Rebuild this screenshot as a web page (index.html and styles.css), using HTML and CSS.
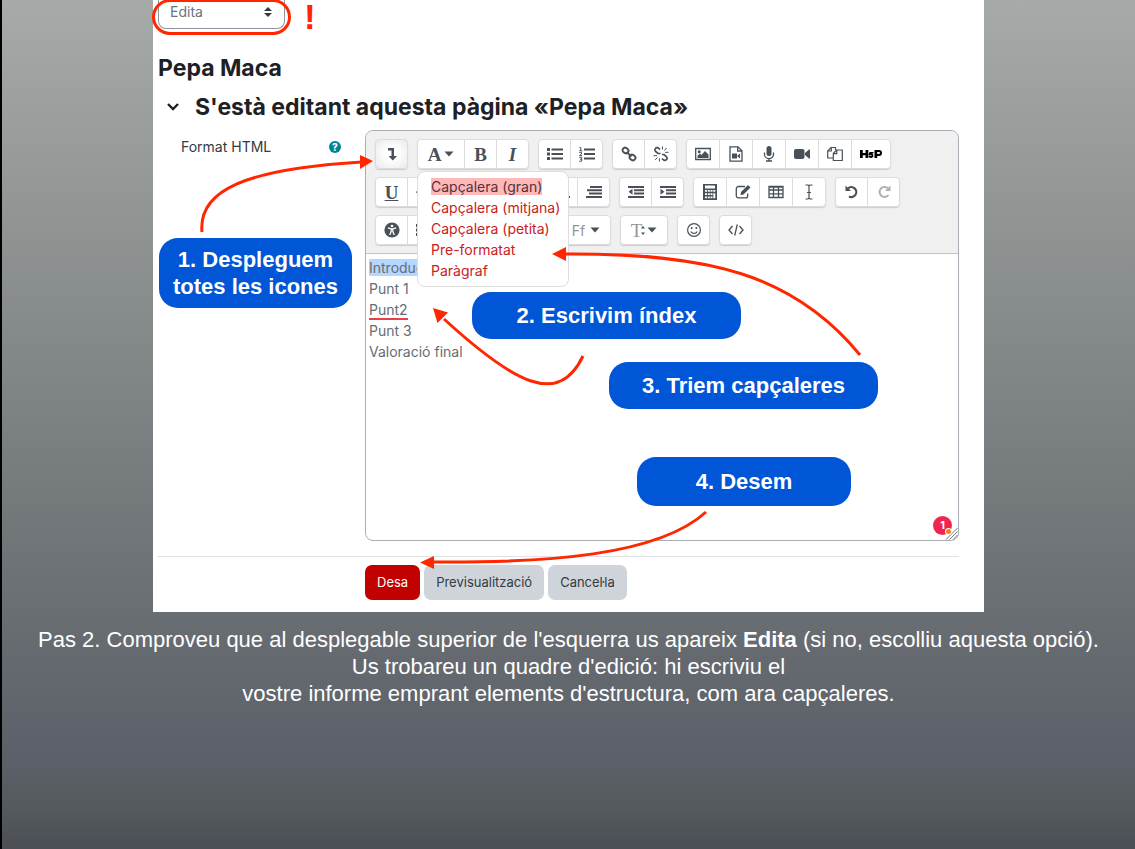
FILE: index.html
```html
<!DOCTYPE html>
<html lang="ca">
<head>
<meta charset="utf-8">
<title>Pas 2. Edita</title>
<link rel="stylesheet" href="styles.css">
</head>
<body>
<svg class="defs" width="0" height="0" aria-hidden="true">
  <symbol id="caret" viewBox="0 0 10 6"><path d="M0.5 0.5h9L5 5.5z"/></symbol>
  <symbol id="list" viewBox="0 0 16 16"><path d="M0 2h3v3H0zM0 6.5h3v3H0zM0 11h3v3H0zM4.5 2.5H16v2H4.500zM4.500 7H16v2H4.500zM4.500 11.500H16v2H4.500z"/></symbol>
  <symbol id="right" viewBox="0 0 16 16"><path d="M4 2h12v2H4zM1 5.300h15v2H1zM3 8.600h13v2H3zM0 12h16v2H0z"/></symbol>
  <symbol id="center" viewBox="0 0 16 16"><path d="M3 2h10v2H3zM1 5.300h14v2H1zM4 8.600h8v2H4zM0 12h16v2H0z"/></symbol>
</svg>
<main class="slide">
  <section class="shot">
    <form class="page">
      <select class="mode" aria-label="Mode"><option>Edita</option></select>
      <h1 class="title">Pepa Maca</h1>
      <h2 class="title subtitle">
        <svg class="chevron" viewBox="0 0 14 10"><path d="M2 2l5 5 5-5" fill="none" stroke="currentColor" stroke-width="2.400"/></svg>
        S'està editant aquesta pàgina «Pepa Maca»
      </h2>
      <div class="field">
        <div class="label">
          <span id="format-label">Format HTML</span>
          <button type="button" class="help" aria-label="Ajuda">?</button>
        </div>
        <div class="editor">
          <div class="toolbar">
            <div class="row">
              <div class="group"><button type="button" class="on" aria-label="Més icones"><svg viewBox="0 0 16 16"><path d="M4 2h6v8h3l-4.200 4.500L4.500 10h3V4.500H4z"/></svg></button></div>
              <div class="group">
                <div class="drop">
                  <button type="button" class="menu-button serif" aria-label="Estils">A<svg class="caret"><use href="#caret"/></svg></button>
                  <div class="menu">
                    <a href="#"><mark>Capçalera (gran)</mark></a>
                    <a href="#">Capçalera (mitjana)</a>
                    <a href="#">Capçalera (petita)</a>
                    <a href="#">Pre-formatat</a>
                    <a href="#">Paràgraf</a>
                  </div>
                </div>
                <button type="button" class="serif">B</button>
                <button type="button" class="serif italic">I</button>
              </div>
              <div class="group">
                <button type="button" aria-label="Llista"><svg viewBox="0 0 16 16"><use href="#list"/></svg></button>
                <button type="button" aria-label="Llista numerada"><svg viewBox="0 0 16 16"><path d="M5 2.500h11v2H5zM5 7h11v2H5zM5 11.500h11v2H5z"/><path d="M0.500 1.500h1.300v3.300M0.300 4.800h3M0.300 6.600h2.200v1.500L.5 9.600h2.500M.3 11.300h2.400v3.900H.3M1 13.200h1.700" fill="none" stroke="currentColor"/></svg></button>
              </div>
              <div class="group">
                <button type="button" aria-label="Enllaç"><svg viewBox="0 0 16 16"><g fill="none" stroke="currentColor" stroke-width="1.900"><rect x="1.500" y="2" width="6" height="5" rx="2.400" transform="rotate(35 4.500 4.500)"/><rect x="8.500" y="9" width="6" height="5" rx="2.400" transform="rotate(35 11.500 11.500)"/><path d="M5.500 6l5 4.500"/></g></svg></button>
                <button type="button" aria-label="Treu l'enllaç"><svg viewBox="0 0 16 16"><g fill="none" stroke="currentColor" stroke-width="1.700"><path d="M7 3.500L5.500 2.200a2 2 0 0 0-3 .3a2 2 0 0 0 .2 3L5 7.500h2.500M9 12.500l1.500 1.400a2 2 0 0 0 3-.300a2 2 0 0 0-.2-3L11 8.500H9"/><path d="M9.500.5v3M11.500 4.500l2-2.500M12 6.300h3.500M6.500 12.500v3M4.500 11.500l-2.300 2.300M4 9.700H.5" stroke-width="1"/></g></svg></button>
              </div>
              <div class="group wide">
                <button type="button" aria-label="Imatge"><svg viewBox="0 0 16 16"><path d="M.7 2.500h14.600v11H.7z" fill="none" stroke="currentColor" stroke-width="1.300"/><circle cx="4.200" cy="5.700" r="1.500"/><path d="M2.500 12V9.800L5 7.500l1.500 1.500 3.500-4 3.500 3.500V12z"/></svg></button>
                <button type="button" aria-label="Multimèdia"><svg viewBox="0 0 16 16"><path d="M2 .8h8l4 4v10.400H2zM9.700 1v4H14" fill="none" stroke="currentColor" stroke-width="1.300"/><path d="M4 7.500h5v5H4zM9 10l3-2.500v5z"/></svg></button>
                <button type="button" aria-label="Àudio"><svg viewBox="0 0 16 16"><rect x="5.500" y="0" width="5" height="10" rx="2.500"/><path d="M3.500 6.500v1.700a4.500 4.500 0 0 0 9 0V6.500M8 12.500V15M5 15h6" fill="none" stroke="currentColor" stroke-width="1.300"/></svg></button>
                <button type="button" aria-label="Vídeo"><svg viewBox="0 0 16 16"><rect x="0" y="3" width="10.500" height="10" rx="2"/><path d="M11 7l4-3.500h1v9h-1L11 9z"/></svg></button>
                <button type="button" aria-label="Fitxers"><svg viewBox="0 0 16 16"><path d="M6 12H.7V5L4 1.500h4.500V4M4.300 1.800V5H1M6.300 7.500L9.500 4h5.800v10.500h-9zM9.800 4.200v3.500H6.500" fill="none" stroke="currentColor" stroke-width="1.200"/></svg></button>
                <button type="button" class="h5p" aria-label="H5P"><svg viewBox="0 0 22 12"><path d="M0 2h2.800v3h2.700V2h2.800v8H5.500V7.200H2.800V10H0zM9.500 4h4v1.500h-2c2.500.3 2.800 4.500-.5 4.500-1.500 0-2.300-.8-2.500-2l1.800-.3c.5.800 1.500.3 1.200-.4-.3-.6-1.200-.5-1.700.200l-1.300-.5z"/><path fill-rule="evenodd" d="M14.500 2H19a3 3 0 0 1 0 6h-1.800v2h-2.700zM17.200 4v2H19a1 1 0 0 0 0-2z"/></svg></button>
              </div>
            </div>
            <div class="row">
              <div class="group">
                <button type="button" class="serif underline">U</button>
                <button type="button" aria-label="Barrat"><svg viewBox="0 0 16 16"><path d="M0 7.500h16v1.200H0z"/></svg></button>
                <button type="button" aria-label="Subíndex"></button>
                <button type="button" aria-label="Superíndex"></button>
              </div>
              <div class="group">
                <button type="button" aria-label="Esquerra"><svg viewBox="0 0 16 16"><use href="#list"/></svg></button>
                <button type="button" aria-label="Centra"><svg viewBox="0 0 16 16"><use href="#center"/></svg></button>
                <button type="button" aria-label="Dreta"><svg viewBox="0 0 16 16"><use href="#right"/></svg></button>
              </div>
              <div class="group">
                <button type="button" aria-label="Redueix el sagnat"><svg viewBox="0 0 16 16"><path d="M0 2h16v2H0zM6 5.300h10v2H6zM6 8.600h10v2H6zM0 12h16v2H0zM4.500 4.800v6L.5 7.800z"/></svg></button>
                <button type="button" aria-label="Augmenta el sagnat"><svg viewBox="0 0 16 16"><path d="M0 2h16v2H0zM6 5.300h10v2H6zM6 8.600h10v2H6zM0 12h16v2H0zM.5 4.800v6l4-3z"/></svg></button>
              </div>
              <div class="group wide">
                <button type="button" aria-label="Equació"><svg viewBox="0 0 16 16"><path fill-rule="evenodd" d="M1 0h14v16H1zM3 1.500v3h10v-3zM3 6v1.800h2V6zm2.800 0v1.800h2V6zm2.700 0v1.800h2V6zM11.300 6v1.800h2V6zM3 9.200V11h2V9.200zm2.800 0V11h2V9.200zm2.700 0V11h2V9.200zM3 12.500v1.800h2v-1.800zm2.800 0v1.800h2v-1.800zm2.700 0v1.800h2v-1.800zM11.300 9.200v5h2v-5z"/></svg></button>
                <button type="button" aria-label="Edita caràcter"><svg viewBox="0 0 16 16"><path d="M10 2.500H3.500a2.200 2.200 0 0 0-2.200 2.200v7a2.200 2.200 0 0 0 2.200 2.200h7a2.200 2.200 0 0 0 2.200-2.200V9.500" fill="none" stroke="currentColor" stroke-width="1.300"/><path d="M13 1l2.500 2.500L8.500 10.500 5.500 11l.5-3z"/></svg></button>
                <button type="button" aria-label="Taula"><svg viewBox="0 0 16 16"><path d="M1 2.500h14v11H1zM1 6h14M1 9.800h14M5.500 2v12M10.500 2v12M1 3h14" fill="none" stroke="currentColor" stroke-width="1.300"/></svg></button>
                <button type="button" aria-label="Neteja"><svg viewBox="0 0 16 16"><path d="M4.500 1H7l1 1 1-1h2.500M8 2v12M4.500 15H7l1-1 1 1h2.500M6 8.500h4" fill="none" stroke="currentColor" stroke-width="1.200"/></svg></button>
              </div>
              <div class="group">
                <button type="button" aria-label="Desfés"><svg viewBox="0 0 16 16"><path d="M4 4.300A5 5 0 1 1 5 12.500" fill="none" stroke="currentColor" stroke-width="2.200"/><path d="M1.500 1.500v5.500H7z"/></svg></button>
                <button type="button" class="off" aria-label="Refés"><svg viewBox="0 0 16 16"><path d="M12 4.300A5 5 0 1 0 12.500 11" fill="none" stroke="currentColor" stroke-width="2"/><path d="M14.500 1.500v5.500H9z"/></svg></button>
              </div>
            </div>
            <div class="row">
              <div class="group">
                <button type="button" aria-label="Accessibilitat"><svg viewBox="0 0 16 16"><circle cx="8" cy="8" r="7.600"/><g fill="none" stroke="#fff" stroke-width="1.300"><path d="M3.800 5.800L7 6.800h2l3.200-1M7.200 6.800v2.500L5.800 13M8.800 6.800v2.500l1.400 3.700"/></g><circle cx="8" cy="4" r="1.300" fill="#fff"/></svg></button>
                <button type="button" aria-label="Lector de pantalla"><svg viewBox="0 0 16 16"><use href="#list"/></svg></button>
              </div>
              <div class="group">
                <button type="button" class="menu-button" aria-label="Color"></button>
                <button type="button" class="menu-button" aria-label="Fons"></button>
              </div>
              <div class="group">
                <button type="button" class="menu-button family"><span>Ff</span><svg class="caret"><use href="#caret"/></svg></button>
              </div>
              <div class="group">
                <button type="button" class="menu-button serif size" aria-label="Mida"><span>T</span><svg class="updown" viewBox="0 0 6 12"><path d="M3 2l2 2.500H1zM3 11L1 8.500h4z"/></svg><svg class="caret"><use href="#caret"/></svg></button>
              </div>
              <div class="group"><button type="button" aria-label="Emoji"><svg viewBox="0 0 16 16"><circle cx="8" cy="8" r="6.400" fill="none" stroke="currentColor" stroke-width="1.200"/><circle cx="5.700" cy="6" r="1"/><circle cx="10.300" cy="6" r="1"/><path d="M4.800 9.500c1.200 2.600 5.200 2.600 6.400 0" fill="none" stroke="currentColor" stroke-width="1.200"/></svg></button></div>
              <div class="group"><button type="button" aria-label="HTML"><svg viewBox="0 0 16 16"><path d="M4.500 4L1 8l3.500 4M11.500 4L15 8l-3.500 4M9.300 2.500l-2.600 11" fill="none" stroke="currentColor" stroke-width="1.300"/></svg></button></div>
            </div>
          </div>
          <div class="content" contenteditable="true" spellcheck="false" role="textbox" aria-labelledby="format-label">
            <p><mark>Introducció</mark></p>
            <p>Punt 1</p>
            <p><span class="typo">Punt2</span></p>
            <p>Punt 3</p>
            <p>Valoració final</p>
          </div>
          <div class="badge">1</div>
          <svg class="grip" viewBox="0 0 12 12"><path d="M0 11.500L11.500 0M3.500 11.500l8-8M7 11.500L11.500 7" fill="none" stroke="#777"/><circle cx="2.500" cy="3.500" r="3.500" fill="#fff"/><circle cx="2.500" cy="3.500" r="2.500" fill="#f58220"/></svg>
        </div>
      </div>
      <div class="actions">
        <button type="submit" class="btn primary">Desa</button>
        <button type="button" class="btn">Previsualització</button>
        <button type="button" class="btn">Cancel·la</button>
      </div>
    </form>
    <svg class="arrows" viewBox="153 0 831 612" aria-hidden="true">
      <g fill="none" stroke="#ff2600" stroke-width="3">
        <rect x="153.500" y="0.500" width="136" height="33" rx="16.500"/>
        <path d="M202 232C198 190 246 169 362 162"/>
        <path d="M583 356C559 407 515 384 444 319"/>
        <path d="M860 355C794 274 708 253 564 254"/>
        <path d="M706 512C658 556 545 563 431 562"/>
      </g>
      <g fill="#ff2600">
        <path d="M373 161L360 155V169z"/>
        <path d="M433 308L448 312.500L437.500 323z"/>
        <path d="M552 254L566 247V261z"/>
        <path d="M420 562.500L434 556V569z"/>
      </g>
    </svg>
    <strong class="bang">!</strong>
    <div class="callout one">1. Despleguem<br>totes les icones</div>
    <div class="callout two">2. Escrivim índex</div>
    <div class="callout three">3. Triem capçaleres</div>
    <div class="callout four">4. Desem</div>
  </section>
  <p class="caption">Pas 2. Comproveu que al desplegable superior de l'esquerra us apareix <b>Edita</b> (si no, escolliu aquesta opció).<br>Us trobareu un quadre d'edició: hi escriviu el<br>vostre informe emprant elements d'estructura, com ara capçaleres.</p>
</main>
</body>
</html>
```
FILE: styles.css
```css
* { box-sizing: border-box; }
body { margin: 0; }
.defs { position: absolute; }
.slide {
  min-height: 100vh;
  border-left: 2px solid #000;
  background: linear-gradient(#a6aaa8 0%, #9a9e9c 14%, #6b7074 70%, #5b5f68 90%, #555a5d 95%, #4b4f56 100%);
}
.shot {
  position: relative;
  max-width: 831px;
  margin: 0 auto;
  background: #fff;
  font-family: Inter, "Liberation Sans", sans-serif;
  font-size: 14px;
  line-height: 21px;
  color: #343a40;
}
.page { padding: 0 25px 12px 5px; }
button, select { font: inherit; color: inherit; }
.mode {
  display: block;
  appearance: none;
  width: 127px;
  height: 29px;
  margin: 0;
  padding: 0 11px 5px;
  border: 1px solid #8f959e;
  border-top: 0;
  border-radius: 0 0 8px 8px;
  color: #6a737b;
  background: #fff url("data:image/svg+xml,%3Csvg xmlns='http://www.w3.org/2000/svg' viewBox='0 0 8 10'%3E%3Cpath fill='%23343a40' d='M4 0l4 4H0zM4 10L0 6h8z'/%3E%3C/svg%3E") no-repeat 105px 7px / 8px 10px;
}
.title { margin: 24px 0 0; font-size: 23px; line-height: 30px; font-weight: 700; color: #1d2125; }
.subtitle { display: flex; align-items: center; margin-top: 9px; }
.chevron { width: 14px; height: 10px; margin: 0 15px 0 8px; }
.field { display: grid; grid-template-columns: 207px 1fr; margin-top: 8px; }
.label { display: flex; justify-content: space-between; align-items: center; height: 21px; margin: 6px 24px 0 23px; }
.help {
  width: 12px; height: 12px; padding: 0; border: 0; border-radius: 50%;
  background: #008196; color: #fff; font-size: 10px; line-height: 12px; font-weight: 800;
}
.editor { position: relative; border: 1px solid #a9aeb6; border-radius: 8px; }
.toolbar {
  display: flex; flex-direction: column; gap: 8px;
  padding: 8px 9px; border-bottom: 1px solid #bfc4cb; border-radius: 8px 8px 0 0; background: #f0f0f0;
}
.row { display: flex; gap: 9px; }
.group { display: flex; border-radius: 4px; box-shadow: 0 1px 1px #ccc; }
.group button {
  display: flex; align-items: center; justify-content: center;
  width: 33px; height: 30px; padding: 0; border: 1px solid #dcdcdc; background: #fff; color: #495057;
}
.group > * + * { margin-left: -1px; }
.group > :first-child, .group > :first-child > button { border-radius: 4px 0 0 4px; }
.group > :last-child { border-radius: 0 4px 4px 0; }
.group > :only-child { border-radius: 4px; }
.group.wide button { width: 34px; }
.group svg { width: 16px; height: 16px; fill: currentColor; }
.group .on { background: radial-gradient(#fff 30%, #e9e9e9); }
.group .off { color: #adb1b5; }
.group .menu-button { width: 48px; gap: 3px; }
.group .caret { width: 10px; height: 6px; }
.group .updown { width: 6px; height: 12px; margin-left: -3px; }
.group.wide .h5p { width: 40px; color: #000; }
.group .h5p svg { width: 22px; height: 12px; }
.serif { font-family: "Liberation Serif", serif; font-size: 19px; font-weight: 700; }
.group .size { gap: 1px; font-weight: 400; }
.size span, .family span { color: #90959a; }
.group .family { width: 58px; padding-left: 8px; gap: 5px; }
.italic { font-style: italic; }
.underline { text-decoration: underline; }
.drop { position: relative; }
.menu {
  position: absolute; z-index: 2; top: 32px; left: 0;
  padding: 4px 8px 5px 13px; border: 1px solid #ddd; border-radius: 8px; background: #fff; white-space: nowrap;
}
.menu a { display: block; color: #ca2020; text-decoration: none; }
.menu mark { background: #ffb8b8; color: #553238; }
.content { min-height: 286px; padding: 3px; color: #666d74; outline: 0; }
.content p { margin: 0; }
.content mark { background: #b3d7ff; color: inherit; }
.typo { display: inline-block; height: 21px; border-bottom: 2px solid #e8404a; vertical-align: top; }
.badge {
  position: absolute; right: 6px; bottom: 5px; width: 19px; height: 19px; border-radius: 50%;
  background: #f0264f; color: #fff; font-size: 11px; line-height: 19px; font-weight: 700; text-align: center;
}
.grip { position: absolute; right: 0; bottom: 0; width: 12px; height: 12px; overflow: visible; }
.actions { display: flex; gap: 4px; margin-top: 15px; padding: 8px 0 0 207px; border-top: 1px solid #dee2e6; }
.btn { height: 35px; padding: 0 12px; border: 0; border-radius: 7px; background: #ced4da; color: #343a40; font-size: 13px; }
.primary { background: #c10000; color: #fff; }
.arrows { position: absolute; z-index: 3; top: 0; left: 0; width: 831px; height: 612px; overflow: visible; pointer-events: none; }
.bang { position: absolute; top: 0; left: 151px; font: 700 35px/34px "Liberation Sans", Arial, sans-serif; color: #ff2600; }
.callout {
  position: absolute; z-index: 4; padding: 10px 0; border-radius: 19px; background: #0056d6; color: #fff;
  font: 700 22px/27px "Liberation Sans", Arial, sans-serif; text-align: center;
}
.one { top: 238px; left: 6px; width: 193px; padding: 8px 0; }
.two { top: 292px; left: 319px; width: 269px; }
.three { top: 362px; left: 456px; width: 269px; }
.four { top: 457px; left: 484px; width: 214px; padding: 11px 0; }
.caption { margin: 0; padding: 14px 20px; color: #fff; font: 22px/27px "Liberation Sans", Arial, sans-serif; text-align: center; }
```
